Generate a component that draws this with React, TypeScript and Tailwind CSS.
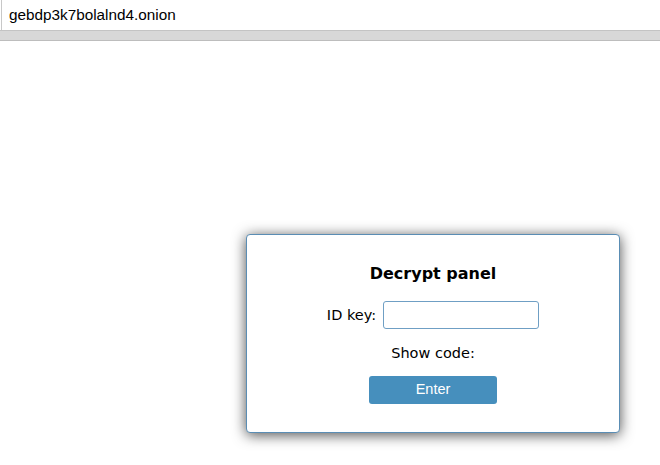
export default function App() {
  return (
    <div className="w-[660px] h-[465px] bg-white overflow-hidden font-['Liberation_Sans',Arial,sans-serif]">
      {/* Address bar */}
      <div className="h-[30px] border-l border-[#c8c8c8] ml-[1px] flex items-center pl-[7px]">
        <span className="text-[15.3px] text-black leading-none">gebdp3k7bolalnd4.onion</span>
      </div>
      <div className="h-[11px] bg-[#d8d8d8] border-t border-[#c4c4c4] border-b border-b-[#bdbdbd]" />

      {/* Decrypt panel */}
      <div className="mt-[193px] ml-[246px] w-[374px] h-[199px] bg-white border border-[#5a8db4] rounded-[4px] shadow-[0_2px_14px_rgba(0,0,0,0.7)] flex flex-col items-center pt-[29px] font-['DejaVu_Sans',Verdana,sans-serif] text-black">
        <h1 className="text-[16px] font-bold leading-[20px]">Decrypt panel</h1>

        <div className="mt-[17px] flex items-center gap-[7px]">
          <label className="text-[14.5px] leading-[20px]">ID key:</label>
          <input
            type="text"
            className="w-[156px] h-[28px] border border-[#6f9fc4] rounded-[3px] px-2 text-[14px] outline-none"
          />
        </div>

        <div className="mt-[14px] text-[14.5px] leading-[20px]">Show code:</div>

        <button className="mt-[13px] w-[128px] h-[28px] bg-[#468fbd] rounded-[3px] text-white text-[14.5px] font-['Liberation_Sans',Arial,sans-serif]">
          Enter
        </button>
      </div>
    </div>
  );
}
